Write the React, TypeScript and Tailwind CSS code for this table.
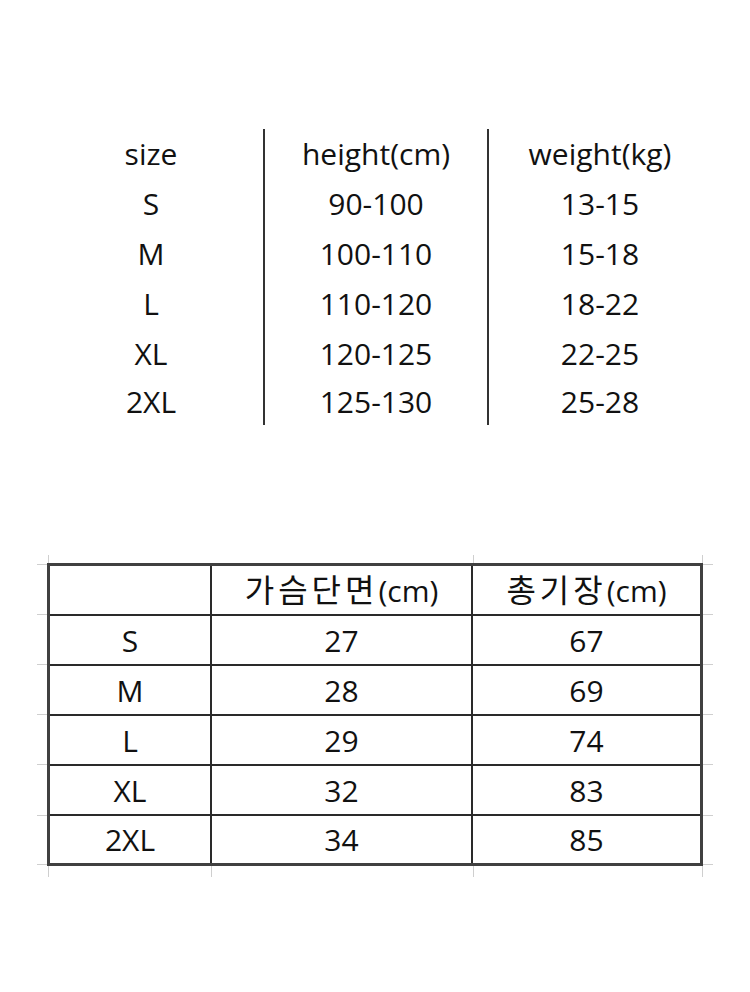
const FONT = "font-['Open_Sans','Noto_Sans_CJK_KR',sans-serif]";

const GUIDE = [
  { size: "S", height: "90-100", weight: "13-15" },
  { size: "M", height: "100-110", weight: "15-18" },
  { size: "L", height: "110-120", weight: "18-22" },
  { size: "XL", height: "120-125", weight: "22-25" },
  { size: "2XL", height: "125-130", weight: "25-28" },
];

const MEASURE = [
  { size: "S", chest: "27", length: "67" },
  { size: "M", chest: "28", length: "69" },
  { size: "L", chest: "29", length: "74" },
  { size: "XL", chest: "32", length: "83" },
  { size: "2XL", chest: "34", length: "85" },
];

function GuideColumn({
  title,
  values,
  divider,
}: {
  title: string;
  values: string[];
  divider?: boolean;
}) {
  const cells = [title, ...values];
  return (
    <div className={`flex w-[224px] flex-col ${divider ? "border-l-2 border-[#333]" : ""}`}>
      {cells.map((v, i) => (
        <div
          key={i}
          className={`flex items-center justify-center ${
            i === cells.length - 1 ? "h-[46px] leading-[46px]" : "h-[50px] leading-[50px]"
          }`}
        >
          {v}
        </div>
      ))}
    </div>
  );
}

function Header({ ko }: { ko: string }) {
  return (
    <span className="flex items-baseline">
      <span className="text-[32px] tracking-[4px]">{ko}</span>
      <span>(cm)</span>
    </span>
  );
}

// faint gridline stubs left over from the spreadsheet the table was cut from
function GridStubs() {
  const rows = [13, 63, 113, 163, 213, 264, 313];
  const cols = [14, 177, 439, 668];
  return (
    <svg
      className="pointer-events-none absolute left-[-12px] top-[-12px]"
      width="680"
      height="340"
      viewBox="0 0 680 340"
    >
      <g stroke="#cfcfcf" strokeWidth="1">
        {rows.map((y) => (
          <g key={y}>
            <line x1="2" y1={y + 0.5} x2="12" y2={y + 0.5} />
            <line x1="668" y1={y + 0.5} x2="678" y2={y + 0.5} />
          </g>
        ))}
        {[14, 439, 668].map((x) => (
          <line key={`t${x}`} x1={x - 0.5} y1="4" x2={x - 0.5} y2="12" />
        ))}
        {cols.map((x) => (
          <line key={`b${x}`} x1={x - 0.5} y1="315" x2={x - 0.5} y2="326" />
        ))}
      </g>
    </svg>
  );
}

export default function App() {
  const rows = [
    { size: "", chest: <Header ko="가슴단면" />, length: <Header ko="총기장" /> },
    ...MEASURE,
  ];

  return (
    <div className={`min-h-[992px] w-[750px] bg-white text-[30px] text-[#111] ${FONT}`}>
      {/* size guide */}
      <div className="ml-[39px] flex pt-[129px]">
        <GuideColumn title="size" values={GUIDE.map((r) => r.size)} />
        <GuideColumn title="height(cm)" values={GUIDE.map((r) => r.height)} divider />
        <GuideColumn title="weight(kg)" values={GUIDE.map((r) => r.weight)} divider />
      </div>

      {/* measurements */}
      <div className="relative ml-[47px] mt-[138px] w-[656px]">
        <GridStubs />
        <div className="border-[3px] border-[#404040]">
          <div className="grid grid-cols-[162px_261px_1fr]">
            {rows.map((r, i) => {
              const row = i === rows.length - 1 ? "h-[47px]" : "h-[50px] border-b-2";
              return [
                <div
                  key={`a${i}`}
                  className={`flex items-center justify-center border-r-2 border-[#2a2a2a] ${row}`}
                >
                  {r.size}
                </div>,
                <div
                  key={`b${i}`}
                  className={`flex items-center justify-center border-r-2 border-[#2a2a2a] ${row}`}
                >
                  {r.chest}
                </div>,
                <div
                  key={`c${i}`}
                  className={`flex items-center justify-center border-[#2a2a2a] ${row}`}
                >
                  {r.length}
                </div>,
              ];
            })}
          </div>
        </div>
      </div>
    </div>
  );
}
